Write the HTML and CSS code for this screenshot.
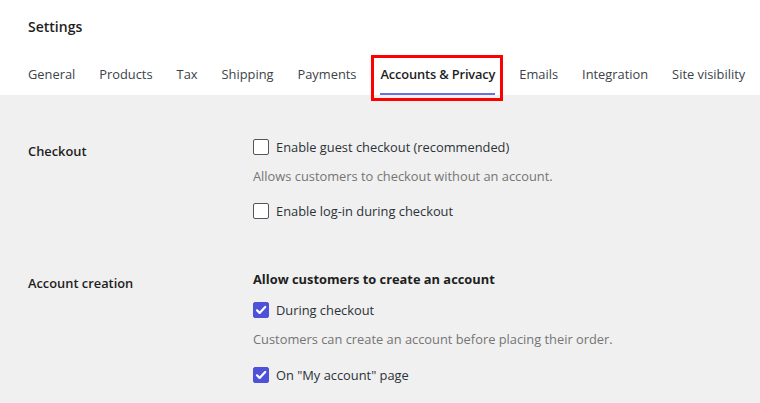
FILE: index.html
```html
<!DOCTYPE html>
<html lang="en">
<head>
<meta charset="utf-8">
<title>Settings</title>
<link rel="stylesheet" href="styles.css">
</head>
<body>
<header class="header">
  <h1 class="title">Settings</h1>
  <nav class="tabs">
    <a class="tab">General</a>
    <a class="tab">Products</a>
    <a class="tab">Tax</a>
    <a class="tab">Shipping</a>
    <a class="tab">Payments</a>
    <a class="tab tab-active">Accounts &amp; Privacy<span class="highlight"></span></a>
    <a class="tab">Emails</a>
    <a class="tab">Integration</a>
    <a class="tab">Site visibility</a>
  </nav>
</header>
<main class="content">
  <section class="section section-checkout">
    <div class="label">Checkout</div>
    <div class="fields">
      <label class="check"><span class="box"></span>Enable guest checkout (recommended)</label>
      <p class="help help-first">Allows customers to checkout without an account.</p>
      <label class="check check-after-help"><span class="box"></span>Enable log-in during checkout</label>
    </div>
  </section>
  <section class="section section-accounts">
    <div class="label">Account creation</div>
    <div class="fields">
      <div class="heading">Allow customers to create an account</div>
      <label class="check check-after-heading"><span class="box box-checked"><svg viewBox="0 0 16 16" width="16" height="16"><path d="M4 8.3l2.6 2.6L12.2 5" fill="none" stroke="#fff" stroke-width="2.2" stroke-linecap="round" stroke-linejoin="round"/></svg></span>During checkout</label>
      <p class="help">Customers can create an account before placing their order.</p>
      <label class="check check-after-help"><span class="box box-checked"><svg viewBox="0 0 16 16" width="16" height="16"><path d="M4 8.3l2.6 2.6L12.2 5" fill="none" stroke="#fff" stroke-width="2.2" stroke-linecap="round" stroke-linejoin="round"/></svg></span>On "My account" page</label>
    </div>
  </section>
</main>
</body>
</html>
```
FILE: styles.css
```css
* { box-sizing: border-box; }
html, body { margin: 0; padding: 0; }
body {
  font-family: "Open Sans", "Noto Sans", sans-serif;
  font-size: 12.85px;
  color: #1e1e1e;
  background: #f0f0f0;
  width: 760px;
  height: 403px;
  overflow: hidden;
}
.header {
  background: #fff;
  padding: 0 0 0 28px;
  height: 95px;
}
.title {
  margin: 0;
  padding-top: 17px;
  font-size: 14px;
  line-height: 20px;
  font-weight: 600;
  color: #1e1e1e;
}
.tabs {
  display: flex;
  gap: 24px;
  margin-top: 27px;
  white-space: nowrap;
}
.tab {
  position: relative;
  display: block;
  font-size: 12.85px;
  line-height: 20px;
  color: #3c434a;
  padding-bottom: 9px;
  border-bottom: 2px solid transparent;
}
.tab-active {
  color: #1e1e1e;
  font-weight: 600;
  letter-spacing: -0.15px;
  border-bottom-color: #6a71df;
}
.highlight {
  position: absolute;
  left: -9px;
  right: -8px;
  top: -9px;
  bottom: -8px;
  border: 3px solid #f00;
}
.content {
  padding: 42px 0 0 28px;
}
.section {
  display: grid;
  grid-template-columns: 225px 1fr;
}
.section-accounts {
  margin-top: 48px;
}
.label {
  line-height: 20px;
  padding-top: 4px;
  font-weight: 600;
  color: #1e1e1e;
}
.fields {
  display: flex;
  flex-direction: column;
  align-items: flex-start;
}
.check {
  display: flex;
  align-items: center;
  gap: 7px;
  line-height: 20px;
  color: #2c3338;
}
.box {
  width: 16px;
  height: 16px;
  border: 1.5px solid #50575e;
  border-radius: 2px;
  background: #fff;
  display: flex;
  align-items: center;
  justify-content: center;
  flex-shrink: 0;
}
.box-checked {
  background: #4e52d8;
  border-color: #4e52d8;
}
.box-checked svg { display: block; flex-shrink: 0; }
.help {
  margin: 9px 0 0;
  line-height: 20px;
  color: #757575;
}
.check-after-help { margin-top: 15px; }
.heading {
  font-weight: 700;
  line-height: 20px;
}
.check-after-heading { margin-top: 11px; }
.section-accounts .check-after-help { margin-top: 16px; }
```
